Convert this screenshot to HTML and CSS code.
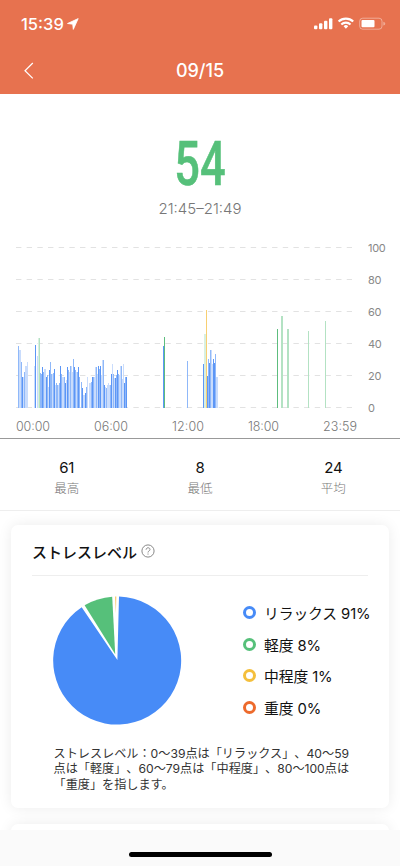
FILE: index.html
```html
<!DOCTYPE html>
<html lang="ja">
<head>
<meta charset="utf-8">
<title>ストレス</title>
<link rel="stylesheet" href="styles.css">
</head>
<body>

<header class="header">
  <div class="status">
    <span class="clock">15:39</span>
    <svg class="arrow" width="12" height="12" viewBox="0 0 12 12"><path d="M11.2.6L.5 5.5l5.2.7.6 5.2z"/></svg>
    <svg class="signals" width="72" height="14" viewBox="0 0 72 14">
      <g fill="#fff">
        <rect x="0" y="8.5" width="3.4" height="3.8" rx="1"/>
        <rect x="5" y="6.2" width="3.4" height="6.1" rx="1"/>
        <rect x="10" y="3.8" width="3.4" height="8.5" rx="1"/>
        <rect x="15" y="1.2" width="3.4" height="11.1" rx="1"/>
        <path d="M29.6 9.2a3.3 3.3 0 0 1 4.6 0l-2.3 2.6z"/>
        <rect x="47.5" y="3.1" width="13" height="7.2" rx="1"/>
      </g>
      <g fill="none" stroke="#fff" stroke-width="2.1">
        <path d="M27.3 7.5a6.6 6.6 0 0 1 9.2 0"/>
        <path d="M24.6 4.6a10.4 10.4 0 0 1 14.6 0"/>
      </g>
      <rect x="45.7" y="1.2" width="22.3" height="11" rx="3" fill="none" stroke="#fff" stroke-opacity=".4"/>
      <path d="M69.3 4.8q2 .4 2 1.9t-2 1.9z" fill="#fff" fill-opacity=".4"/>
    </svg>
  </div>
  <div class="nav">
    <svg class="back" width="10" height="18" viewBox="0 0 10 18"><path d="M8.8 1L1 8.7l7.8 7.7"/></svg>
    <h1>09/15</h1>
  </div>
</header>

<section class="summary">
  <div class="score">54</div>
  <div class="range">21:45–21:49</div>
</section>

<svg class="chart" width="400" height="200" viewBox="0 238 400 200">
  <g id="grid"></g>
  <g id="bars" shape-rendering="crispEdges"></g>
  <g class="xaxis">
    <text x="16" y="431" textLength="34">00:00</text>
    <text x="94" y="431" textLength="34">06:00</text>
    <text x="172" y="431" textLength="32">12:00</text>
    <text x="248" y="431" textLength="31">18:00</text>
    <text x="323" y="431" textLength="34">23:59</text>
  </g>
</svg>

<section class="stats">
  <div><b>61</b><span>最高</span></div>
  <div><b>8</b><span>最低</span></div>
  <div><b>24</b><span>平均</span></div>
</section>

<main class="cards">
  <section class="card">
    <h2>ストレスレベル
      <svg width="14" height="14" viewBox="0 0 14 14"><circle cx="7" cy="7" r="6.1"/><path d="M5.1 5.7c0-2.6 3.9-2.5 3.9-.2C9 6.9 7 6.9 7 8.5M7 9.5v1.1"/></svg>
    </h2>
    <div class="levels">
      <svg width="130" height="130" viewBox="52 595 130 130">
        <path fill="#478bf7" d="M117.4 660L119 596.6A64 64 0 1 1 81.7 607.3z"/>
        <path fill="#56c07a" d="M115.2 654.2L84.6 605.3A64 64 0 0 1 112.2 596.8z"/>
        <path fill="#f7c460" d="M115.1 596.6h1.2l-.4 17z"/>
      </svg>
      <ul>
        <li class="relax">リラックス 91%</li>
        <li class="mild">軽度 8%</li>
        <li class="medium">中程度 1%</li>
        <li class="severe">重度 0%</li>
      </ul>
    </div>
    <p>ストレスレベル：0〜39点は「リラックス」、40〜59<br>点は「軽度」、60〜79点は「中程度」、80〜100点は<br>「重度」を指します。</p>
  </section>
  <section class="card next"></section>
</main>

<footer class="home"><div></div></footer>

<script>
var colors = {
  d: '#5c96f6', m: '#8fb8f9', l: '#c9dcfc',
  G: '#5dbd7e', g: '#b3e2c3', f: '#d9f0e1', y: '#f8cf72'
};
// first column, then top + shade of each column, '-' is a gap
var runs = [
  [18, '346m 350l 350l 362m 377d 377l 372m 366l 366l 362l'],
  [34, '366l 345d - 356l 338f 338g 373m 374m 367d 372m 369l 369l 377d 375m 387l 370d 362m 374m 374l 373m 369d 385l 383m 385m 385l 383m 366d 374m 377l 377l 377m 383d 380l 367d 370m 372l 366m 366l 372l 359m 367d 370m 372l 372m 367d 377m'],
  [81, '382m 388d 395l 395l 393d 387m 377l - 383l 383l 382m 377d 377m 377l 367l 367m 374l 366d 369m 366d 375l 360l 360m 385d 387l 388m 385l 383l 385l 385m 374d 364l 374m 378l 378d 375m 370d 374m 375l 366l 366m 379l 364l 383d 377m 377d'],
  [163, '346d 337G'], [187, '361m'],
  [203, '364d 334f 334f 310y 376d 359m 363d 350m 350l 364l 359d 363d 354m 377l 377l'],
  [277, '329G'], [281, '316g 316g'], [287, '329g 329g'], [308, '331g'], [325, '321g']
];
var html = '';
runs.forEach(function(run) {
  run[1].split(' ').forEach(function(bar, i) {
    if (bar === '-') return;
    var top = parseInt(bar);
    html += '<rect x="' + (run[0] + i) + '" y="' + top + '" width="1" height="' + (408 - top) + '" fill="' + colors[bar.slice(-1)] + '"/>';
  });
});
document.getElementById('bars').innerHTML = html;

html = '';
for (var v = 0; v <= 100; v += 20) {
  var y = 407.5 - v * 1.6;
  html += '<path d="M16 ' + y + 'H352"/><text x="368" y="' + (y + 4) + '">' + v + '</text>';
}
document.getElementById('grid').innerHTML = html;
</script>

</body>
</html>
```

FILE: styles.css
```css
* {
  box-sizing: border-box;
}
body {
  margin: 0;
  height: 866px;
  overflow: hidden;
  display: flex;
  flex-direction: column;
  background: #fff;
  color: #111;
  font-family: Inter, "Noto Sans CJK JP", sans-serif;
  text-spacing-trim: space-all;
}
.header {
  height: 94px;
  flex: none;
  background: #e7724f;
  color: #fff;
}
.status {
  display: flex;
  align-items: center;
  height: 48px;
  padding: 0 14px 0 21px;
}
.clock {
  width: 43px;
  font-size: 16.5px;
  font-weight: 500;
  white-space: nowrap;
}
.arrow {
  margin-left: 3px;
  margin-top: -1px;
  fill: #fff;
  stroke: #fff;
  stroke-width: .8;
  stroke-linejoin: round;
}
.signals {
  margin-left: auto;
}
.nav {
  display: grid;
  grid-template-columns: 34px 1fr 34px;
  align-items: center;
  height: 46px;
}
.back {
  justify-self: end;
  fill: none;
  stroke: #fff;
  stroke-width: 1.2;
}
.nav h1 {
  margin: 0;
  padding-bottom: 1px;
  text-align: center;
  font-size: 18px;
  font-weight: 500;
}
.summary {
  flex: none;
  height: 144px;
  padding-top: 39px;
  text-align: center;
}
.score {
  height: 61px;
  font: 500 61px/62px Roboto, sans-serif;
  color: #56c07a;
  -webkit-text-stroke: .6px #56c07a;
  transform: scaleX(.74);
}
.range {
  font-size: 15px;
  line-height: 30px;
  font-weight: 300;
  color: #777;
}
.chart {
  flex: none;
  display: block;
}
.chart path {
  stroke: #e2e2e2;
  stroke-dasharray: 5.4 5.27;
}
.chart text {
  font-size: 11px;
  letter-spacing: -.3px;
  fill: #888;
}
.chart .xaxis text {
  font-size: 12.5px;
  letter-spacing: 0;
  font-weight: 300;
  fill: #777;
}
.stats {
  flex: none;
  display: grid;
  grid-template-columns: repeat(3, 1fr);
  height: 73px;
  padding-top: 19px;
  border-top: 1px solid #999;
  border-bottom: 1px solid #eee;
  text-align: center;
}
.stats b,
.stats span {
  display: block;
}
.stats b {
  font-size: 15px;
  line-height: 20px;
  font-weight: 400;
  letter-spacing: -.3px;
}
.stats span {
  font-size: 12.5px;
  line-height: 22px;
  font-weight: 300;
  color: #777;
}
.cards {
  height: 319px;
  flex: none;
  padding: 14px 11px 0;
  overflow: hidden;
}
.card {
  height: 283px;
  padding: 13px 21px 0;
  border-radius: 7px;
  background: #fff;
  box-shadow: 0 0 14px rgba(0, 0, 0, .08);
}
.card.next {
  margin-top: 16px;
}
.card h2 {
  display: flex;
  align-items: center;
  gap: 4px;
  height: 38px;
  margin: 0;
  padding-bottom: 11px;
  border-bottom: 1px solid #eee;
  font-size: 15px;
  font-weight: 500;
}
.card h2 svg {
  fill: none;
  stroke: #888;
}
.levels {
  display: flex;
  height: 150px;
  padding: 19px 0 0 20px;
}
.levels svg {
  flex: none;
}
.levels ul {
  margin: 2px 0 0 61px;
  padding: 0;
  list-style: none;
}
.levels li {
  display: flex;
  align-items: center;
  gap: 8px;
  height: 31.6px;
  font-size: 14.8px;
  letter-spacing: -.1px;
  white-space: nowrap;
}
.levels li::before {
  content: "";
  box-sizing: border-box;
  flex: none;
  width: 13px;
  height: 13px;
  border: 3.5px solid #478bf7;
  border-radius: 50%;
}
.levels .mild::before {
  border-color: #56c07a;
}
.levels .medium::before {
  border-color: #f4bf3c;
}
.levels .severe::before {
  border-color: #ed6a2c;
}
.card p {
  margin: 20px 0 0 21.5px;
  font-size: 12.15px;
  line-height: 15.3px;
  color: #333;
  white-space: nowrap;
}
.home {
  flex: 1;
  padding-top: 22px;
  background: #fafafa;
}
.home div {
  width: 143px;
  height: 5px;
  margin: 0 auto;
  border-radius: 3px;
  background: #000;
}
```
